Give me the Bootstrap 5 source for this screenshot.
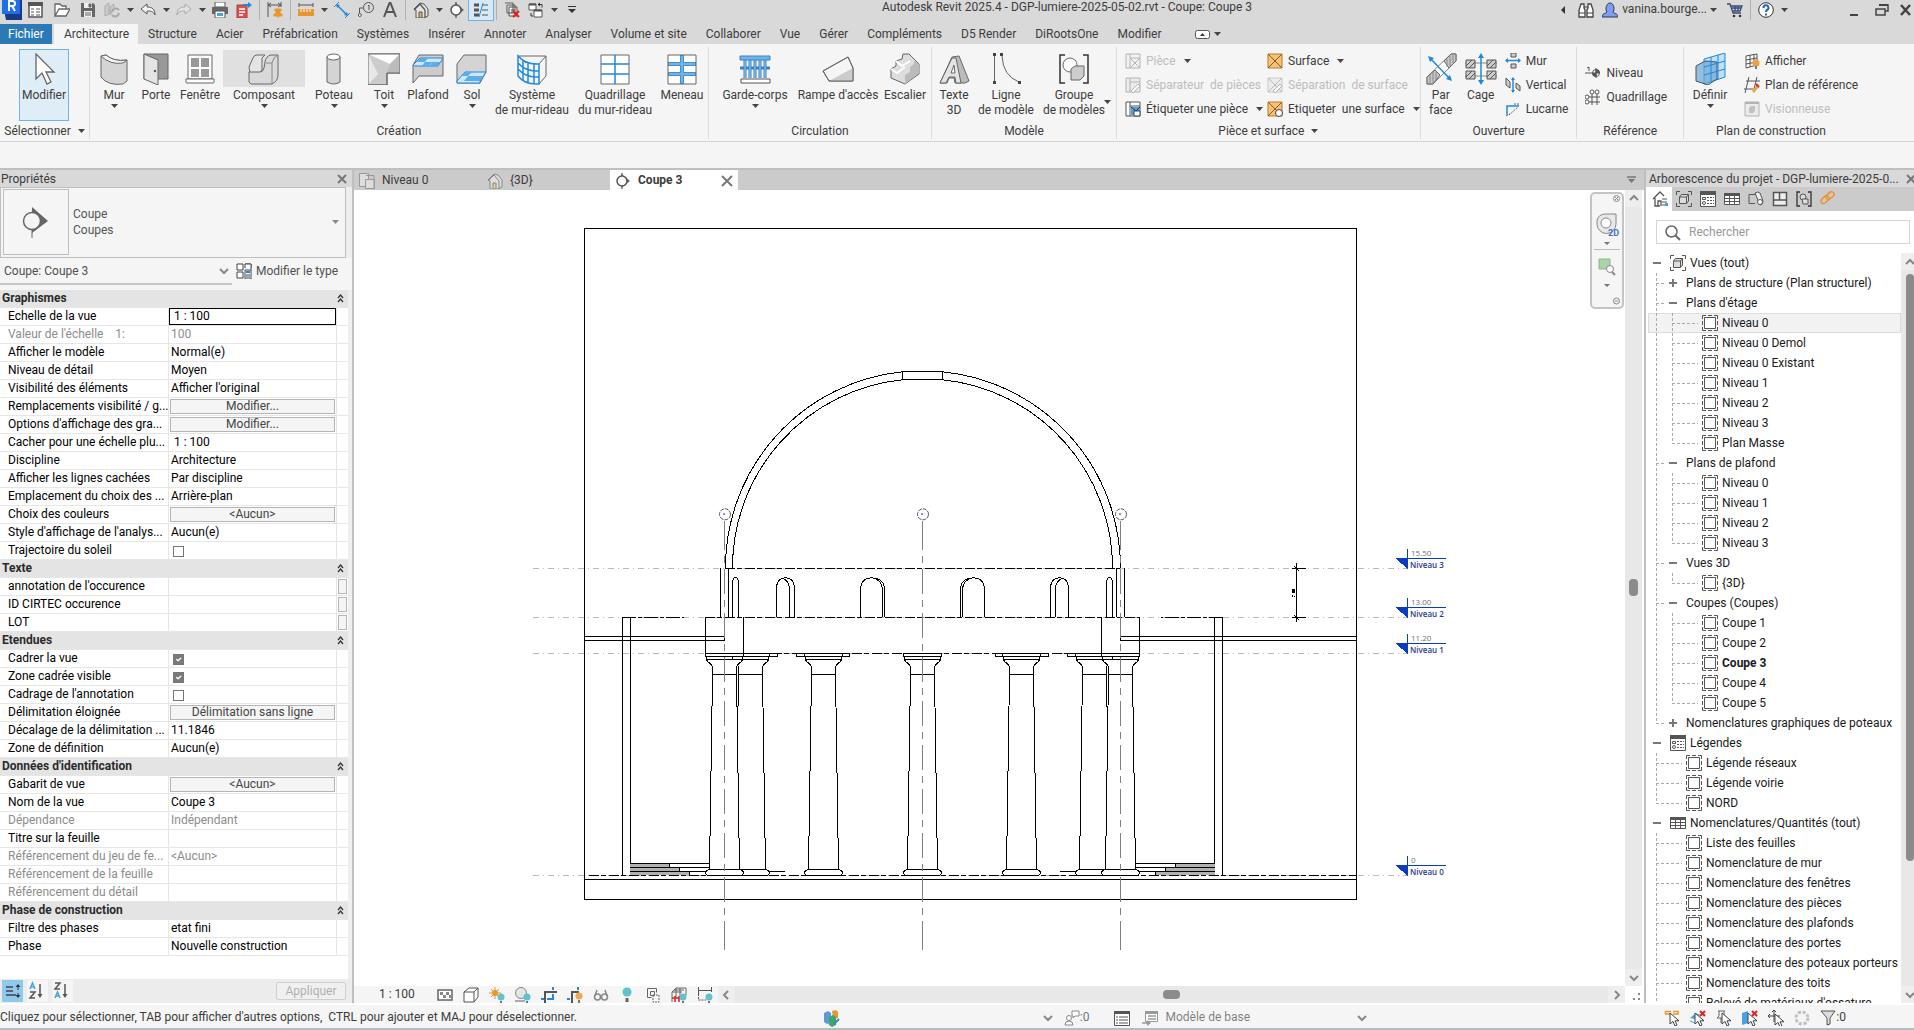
<!DOCTYPE html>
<html lang="fr">
<head>
<meta charset="utf-8">
<meta name="viewport" content="width=device-width, initial-scale=1">
<title>Autodesk Revit 2025.4 - DGP-lumiere-2025-05-02.rvt - Coupe: Coupe 3</title>
<link href="https://cdn.jsdelivr.net/npm/bootstrap@5.3.0/dist/css/bootstrap.min.css" rel="stylesheet">
<style>
:root{--chrome:#d9d9d9;--face:#f5f5f5;--edge:#bfbfbf;--ink:#3c3c3c;--blue:#2c7ab5}
body{font-family:Roboto,"Segoe UI",sans-serif;font-size:12px;line-height:15px;color:var(--ink);background:var(--face)}
svg{display:block;flex:none}
button,.tool{background:none;border:0;padding:0;color:inherit;font-size:12px;line-height:15px}
a{color:inherit;text-decoration:none}
.i16{width:16px;height:16px}.i20{width:20px;height:20px}.i32{width:32px;height:32px}.ar{width:7px;height:4px}
.off{color:#bdbdbd}.off svg:not(.ar){opacity:.4}
.titlebar{height:24px;background:var(--chrome);padding-bottom:5px}
.q{width:24px}.qw{width:28px}.qa{width:12px}.qs{width:7px}
.q,.qw,.qa,.qs{display:flex;justify-content:center;align-items:center;height:20px}
.qs::before{content:"";width:1px;height:20px;background:#b0b0b0}
.q-on{background:#d6e9f5;outline:1px solid #6cb4ea}
.tabbar{height:20px;background:var(--chrome)}
.tabbar a{padding:0 9px 0 10px;line-height:20px;white-space:nowrap}
.tabbar .file-tab{background:var(--blue);color:#fff;width:52px;padding:0 8px;margin-right:2px}
.tabbar .tab-on{background:var(--face)}
.ribbon{height:98px;border-bottom:1px solid #d4d4d4}
.rpanel{border-right:1px solid #dcdcdc;margin:3px 0 2px;display:flex;flex-direction:column}
.rpanel:last-child{border:0}
.rbody{display:flex;height:76px;padding-top:2px}
.rname{display:flex;justify-content:center;align-items:center;gap:7px;height:16px;white-space:nowrap}
.tool{display:flex;flex-direction:column;align-items:center;white-space:nowrap;padding-top:3px;text-align:center;height:72px;border:1px solid transparent;flex:none}
.tool .i32{margin-bottom:3px}
.tool .ar{margin-top:1px}
.pick-body{padding-left:19px;padding-right:20px}
.w40{width:40px}.w44{width:44px}.w50{width:50px}.w56{width:56px}.w60{width:60px}.w76{width:76px}.w84{width:84px}.w90{width:90px}
.tool-on{background:#deedf6;border-color:#6cb4ea}
.tool-hot{background:linear-gradient(#e0e0e0,#e0e0e0) no-repeat 0 0/100% 37px}
.small-tools{display:flex;flex-direction:column}
.small-tools button{display:flex;align-items:center;gap:5px;height:24px;white-space:nowrap}
.small-tools .ar{margin-left:3px}
.options{height:26px}
.main{border-top:2px solid var(--edge);min-height:0}
.props{width:354px;border-right:2px solid var(--edge);background:#eee}
.pane-head{height:17px;background:var(--chrome);padding:2px 4px 0 1px;white-space:nowrap}
.type-box{height:71px;border:1px solid var(--edge);margin-right:6px;background:var(--face);padding:1px 6px 1px 2px;line-height:16px;color:#555}
.type-box .ar{opacity:.6}
.type-pic{width:66px;height:66px;border:1px solid var(--edge)}
.sel-row{height:32px;padding-bottom:5px;background:var(--face);color:#505050}
.sel-wrap{width:232px;height:27px;padding-top:2px;border-bottom:2px solid #c6c6c6}
select,input.plain{appearance:none;border:0;background:none;color:inherit;font-size:12px;padding:0;outline:0;min-width:0}
.grid-wrap{background:#fff;margin-right:4px}
.pgrid{table-layout:fixed;width:350px;border-collapse:separate;border-spacing:0;color:#000}
.pgrid td,.pgrid th{height:18px;padding:0 0 0 8px;white-space:nowrap;overflow:hidden;line-height:16px;font-weight:400;border-right:1px solid #e6e6e6;border-bottom:1px solid #e6e6e6}
.pgrid td{padding:0 0 0 2px}
.pgrid label{display:inline}
.pgrid .sect{background:#e4e4e4;font-weight:700;padding:0 6px 0 2px;color:#2b2b2b;border-right:0}
.pgrid .dim{color:#8c8c8c}
.pgrid button{display:block;width:165px;height:15px;margin-left:-1px;border:1px solid #b5b5b5;background:var(--face);color:#444;line-height:13px}
.pgrid td.mini{padding:0 0 0 1px;overflow:visible}
.pgrid .mini button{width:9px;margin:0}
.pgrid .plain{display:block;width:165px;height:17px;padding-left:3px;color:#000}
.pgrid .boxed{border:1px solid #000;margin-left:-2px;width:167px;padding-left:4px}
.pgrid .form-check-input{display:block;width:11px;height:11px;margin:3px 0 0 2px;border:1px solid #777;border-radius:0}
.pgrid .form-check-input:checked{background-color:#7a7a7a}
.pfoot{height:24px;padding:1px 6px 1px 2px;background:#ececec}
.pfoot button{width:21px;height:22px;background:var(--face)}
.pfoot button.sort-on{background:#8fcaec}
.pfoot .apply{width:70px;height:18px;border:1px solid #cfcfcf;border-radius:2px;color:#b0b0b0;background:#f0f0f0}
.view-tabs{height:20px;background:#cbcbcb}
.view-tabs a{width:128px;padding:2px 5px 0;gap:7px;display:flex;align-items:center}
.view-tabs .view-on{background:#fff;font-weight:700}
.canvas svg.draw{width:100%;height:100%}
.navwheel{position:absolute;right:1px;top:2px;width:34px;height:117px;border:2px solid #c4c4c4;border-radius:5px;background:var(--face)}
.sbar{background:#e8e8e8}
.vbar{width:17px;margin-right:2px}
.sbtn{width:17px;height:17px;background:#eee;display:flex;align-items:center;justify-content:center;flex:none}
.knob{background:#8b8b8b;border-radius:4px}
.vbar .knob{width:9px;height:17px}.hbar .knob{width:17px;height:9px}
.viewctl{height:17px}
.vc-icons{gap:10px;padding:0 5px 0 25px;background:var(--face)}
.tree-pane{width:270px;border-left:2px solid var(--edge);background:#fff}
.tree-pane .pane-head{padding:2px 0 0 3px}
.cats{height:24px;background:#cbcbcb;margin-left:2px}
.cats button{width:24px;height:24px;display:flex;align-items:center;justify-content:center}
.cats .cat-on{background:#fff}
.finder{height:25px;border:1px solid #d4d4d4;margin:9px 4px 9px 10px;padding:1px 8px 0;gap:8px}
.finder input{color:#999}
.finder input::placeholder{color:#999;opacity:1}
.tree{list-style:none;margin:0 0 0 2px;padding:0;overflow:hidden;color:#1a1a1a}
.tree li{display:flex;align-items:center;height:20px;white-space:nowrap}
.tree a{margin-left:4px}
.tree .hover-row{background:#f2f2f2;box-shadow:inset 0 0 0 1px #dcdcdc}
.tbar{width:13px}
.tbar .knob{width:8px;height:587px;margin-left:5px}
.status{height:27px;padding-top:2px;border-top:2px solid #fff;border-bottom:2px solid #b4bcc4;background:var(--face)}
.status select{width:180px}
.status-right{gap:10px;padding-right:68px}
.msg{width:823px}
.lv{font:8px "Open Sans",sans-serif;fill:#707070}.lb{font:600 8px "Open Sans",sans-serif;fill:#2c3a94}
</style>
</head>
<body class="vh-100 overflow-hidden d-flex flex-column">

<svg width="0" height="0" class="position-absolute" aria-hidden="true">
<defs>
<g id="cur"><path d="M0 0v11l3-2.600 2 4.600 2-1-2-4.200h4z" fill="#fff" stroke="#444"/></g>
<symbol id="down" viewBox="0 0 7 4"><path d="M0 0h7L3.500 4z" fill="#444"/></symbol>
<symbol id="chev" viewBox="0 0 16 16"><path d="M4 6l4 4 4-4" fill="none" stroke="#888" stroke-width="2"/></symbol>
<symbol id="secthead" viewBox="0 0 32 32"><path d="M13 2l17 14-17 13z" fill="#666"/><circle cx="14" cy="16" r="10" fill="#fff" stroke="#555" stroke-width="3"/><path d="M14 0v6M14 26v6" stroke="#555" stroke-width="2.500"/></symbol>
<symbol id="sheet" viewBox="0 0 16 16"><path d="M2.500 2.500h11v11h-11z" fill="#fff" stroke="#555" /><path d="M.5 4V.5H4M6 .5h4M12 .5h3.500V4M15.500 6v4M15.500 12v3.500H12M10 15.500H6M4 15.500H.5V12M.5 10V6" fill="none" stroke="#555"/></symbol>
<symbol id="views" viewBox="0 0 16 16"><path d="M.5 4V.5H4M12 .5h3.500V4M15.500 12v3.500H12M4 15.500H.5V12" fill="none" stroke="#555"/><path d="M3.500 6l2-2.500h7V10l-2 2.500h-7z" fill="#ddd" stroke="#555"/><path d="M3.500 6h7v6M10.500 6l2-2.500" fill="none" stroke="#555"/></symbol>
<symbol id="legend" viewBox="0 0 16 16"><path d="M.5.5h15v15H.5z" fill="#fff" stroke="#555"/><path d="M0 0h16v4H0z" fill="#555"/><path d="M2.500 6.500h3v2h-3z" fill="none" stroke="#555"/><circle cx="4" cy="12" r="1.500" fill="none" stroke="#555"/><path d="M7 6.500h7M7 9.500h7M7 12.500h7" stroke="#555" stroke-dasharray="2 1"/></symbol>
<symbol id="table" viewBox="0 0 16 16"><path d="M.5 2.500h15v11H.5z" fill="#fff" stroke="#555"/><path d="M0 2h16v3H0z" fill="#555"/><path d="M0 7.500h16M0 10.500h16M5.500 4v10M10.500 4v10" stroke="#555"/></symbol>
</defs></svg>

<header>
<div class="titlebar d-flex align-items-center">
  <div class="q"><svg width="20" height="20" role="img" aria-label="Revit"><path d="M0 0h20v20H4z" fill="#1b3a86"/><path d="M0 0h18v14H0z" fill="#1f6fe8"/><path d="M7 11V1h3.500a2.500 2.500 0 0 1 0 5H7M10 6l3 5" fill="none" stroke="#fff" stroke-width="2"/></svg></div>
  <button class="q" aria-label="Propriétés"><svg class="i16"><path d="M1 1h13v14H1z" fill="#fff" stroke="#555" stroke-width="1.500"/><path d="M0 0h15v4H0z" fill="#555"/><path d="M3 7h3M3 10h3M3 13h3M8 7h4M8 10h4M8 13h4" stroke="#555"/></svg></button>
  <button class="qw" aria-label="Ouvrir"><svg class="i16"><path d="M1 14V2h5l2 2h4v3M1 14l4-7h11l-4 7z" fill="#fff" stroke="#666" stroke-width="1.300"/></svg></button>
  <button class="q" aria-label="Enregistrer"><svg class="i16"><path d="M1 1h12l2 2v12H1z" fill="#666"/><path d="M4 1h8v5H4zM4 9h8v6H4z" fill="#eee"/><path d="M9 2h2v3H9zM5 11h6M5 13h6" stroke="#666" fill="#666"/></svg></button>
  <button class="q" aria-label="Synchroniser"><svg class="i16"><path d="M1 4l4-3v11l-4 2zM6 5l4-3v5l-4 6z" fill="#ccc" stroke="#aaa"/><path d="M8 10a4 4 0 0 1 7-2M15 11a4 4 0 0 1-7 2" fill="none" stroke="#aaa" stroke-width="2"/></svg></button>
  <span class="qa"><svg class="ar"><use href="#down"/></svg></span>
  <button class="q" aria-label="Annuler"><svg class="i16"><path d="M1 7l6-5v3c5 0 8 2 8 8-2-4-4-4-8-4v3z" fill="#f5f5f5" stroke="#555"/></svg></button>
  <span class="qa"><svg class="ar"><use href="#down"/></svg></span>
  <button class="q" aria-label="Rétablir"><svg class="i16"><path d="M15 7L9 2v3C4 5 1 7 1 13c2-4 4-4 8-4v3z" fill="#e2e2e2" stroke="#aaa"/></svg></button>
  <span class="qa"><svg class="ar"><use href="#down"/></svg></span>
  <button class="q" aria-label="Imprimer"><svg class="i16"><path d="M3 0h10v5H3z" fill="#fff" stroke="#555"/><path d="M0 5h16v7H0z" fill="#666"/><path d="M3 9h10v7H3z" fill="#fff" stroke="#555"/><path d="M5 11h6v3H5z" fill="#4aa3e0"/></svg></button>
  <button class="q" aria-label="Exporter en PDF"><svg class="i16"><path d="M1 3h10v13H1z" fill="#d9534f" stroke="#b03a36"/><path d="M3 7h6M3 10h6M3 13h4" stroke="#fff" stroke-width="1.500"/><path d="M7 2h5V0l4 3-4 3V4H7z" fill="#1e88e0"/></svg></button>
  <span class="qs"></span>
  <button class="q" aria-label="Cote alignée"><svg class="i16"><path d="M1 0v15M14 0v5M1 3h13M4 1L1 3l3 2M11 1l3 2-3 2" fill="none" stroke="#555"/><path d="M8 7h6v2h-1v3h2v2H7v-2h2V9H8zM11 14v2" fill="#e8962e" stroke="#e8962e"/></svg></button>
  <span class="qs"></span>
  <button class="q" aria-label="Mesurer"><svg class="i16"><path d="M1 1v4M15 1v4M1 3h14" stroke="#555"/><path d="M0 7h16v7H0z" fill="#e8962e"/><path d="M3 7v3M6 7v3M9 7v3M12 7v3" stroke="#fff"/></svg></button>
  <span class="qa"><svg class="ar"><use href="#down"/></svg></span>
  <button class="q" aria-label="Cote"><svg class="i16"><path d="M3 3l10 10" stroke="#1e88e0" stroke-width="1.500"/><path d="M0 5l5-5M11 16l5-5" stroke="#1e88e0"/><path d="M2 2l4 1-3 3zM14 14l-4-1 3-3z" fill="#1e88e0"/></svg></button>
  <button class="q" aria-label="Étiquette"><svg class="i16"><circle cx="10.500" cy="5.500" r="5" fill="none" stroke="#555"/><path d="M10 4l1-1v5M5.500 6H1.500v6" fill="none" stroke="#555"/><circle cx="1.800" cy="13" r="1.500" fill="#fff" stroke="#555"/></svg></button>
  <button class="q" aria-label="Texte"><svg class="i16"><path d="M2 15L7.500 1h1L14 15M4.500 10h7" fill="none" stroke="#555" stroke-width="2"/></svg></button>
  <span class="qs"></span>
  <button class="q" aria-label="Vue 3D"><svg class="i16"><path d="M1 7l6-6 4 1 4 5v7l-4 2H3V8z" fill="#e4e4e4" stroke="#555"/><path d="M1 8l6-6 5 6M12 8v8" fill="none" stroke="#555" stroke-width="1.300"/><path d="M6 10h3v6H6z" fill="#e8b05a" stroke="#555"/></svg></button>
  <span class="qa"><svg class="ar"><use href="#down"/></svg></span>
  <button class="q" aria-label="Coupe"><svg class="i16"><use href="#secthead"/></svg></button>
  <button class="q q-on" aria-label="Lignes fines"><svg class="i16"><path d="M1 3h5M1 8h5M1 13h5" stroke="#555" stroke-width="3"/><path d="M9 3h6M9 8h6M9 13h6" stroke="#555"/><path d="M6 15l4-14" stroke="#1e88e0"/></svg></button>
  <span class="qs"></span>
  <button class="q" aria-label="Fermer les vues masquées"><svg class="i16"><path d="M1 1h8v8M3 3h8v8H3zM5 5h8v9H5z" fill="#eee" stroke="#555"/><path d="M7 8h4M7 10h4" stroke="#555"/><path d="M9 9l6 6M15 9l-6 6" stroke="#e02020" stroke-width="2"/></svg></button>
  <button class="q" aria-label="Changer de fenêtre"><svg class="i16"><path d="M1 2h7v6H1zM6 8h8v7H6z" fill="#fff" stroke="#555"/><path d="M1 2.500h7M6 8.500h8" stroke="#555" stroke-width="2"/><path d="M10 2.500h4v3M12 1l-2 1.500L12 4M3 11v3h2" fill="none" stroke="#333"/></svg></button>
  <span class="qa"><svg class="ar"><use href="#down"/></svg></span>
  <button class="q" aria-label="Personnaliser"><svg width="8" height="8"><path d="M0 .5h8" stroke="#333"/><path d="M0 3h8L4 7z" fill="#333"/></svg></button>
  <div class="flex-grow-1 text-center pb-1 pe-2">Autodesk Revit 2025.4 - DGP-lumiere-2025-05-02.rvt - Coupe: Coupe 3</div>
  <div class="d-flex align-items-center">
    <svg width="12" height="8" class="me-1"><path d="M7 0v8L3 4z" fill="#333"/></svg>
    <button class="q" aria-label="Rechercher"><svg class="i16"><path d="M3 2h3v4l1 2v7H1V8zM10 2h3l2 6v7H9V8l1-2z" fill="#fff" stroke="#444" stroke-width="1.300"/><path d="M6 5h4M1 11h6M9 11h6" stroke="#444"/></svg></button>
    <button class="q" aria-label="Compte"><svg class="i16"><path d="M0 15c0-4 4-3 5-5C3 8 4 1 8 1s5 7 3 9c1 2 5 1 5 5z" fill="#7d9ff0" stroke="#335"/></svg></button>
    <a href="#">vanina.bourge...</a>
    <span class="qa"><svg class="ar"><use href="#down"/></svg></span>
    <button class="q ms-1" aria-label="App Store"><svg class="i16"><path d="M0 2h3l3 9h8M4 4h11l-2 5H6M5 6h9M8 4v5M11 4v5" fill="none" stroke="#3b4a7a" stroke-width="1.300"/><circle cx="7" cy="14" r="1.300" fill="#333"/><circle cx="13" cy="14" r="1.300" fill="#333"/></svg></button>
    <span class="qs"></span>
    <button class="q" aria-label="Aide"><svg class="i16"><circle cx="8" cy="8" r="7.300" fill="#fff" stroke="#333"/><path d="M5.500 6a2.500 2.500 0 1 1 3.500 2q-1 .5-1 2M8 11.500v2" fill="none" stroke="#2a62c0" stroke-width="2"/></svg></button>
    <span class="qa"><svg class="ar"><use href="#down"/></svg></span>
    <span class="d-flex gap-2 ps-5 ms-1">
    <button class="q" aria-label="Réduire"><svg class="i16"><path d="M4 13h8" stroke="#444" stroke-width="2"/></svg></button>
    <button aria-label="Restaurer"><svg class="i16"><path d="M5 3h9v6h-3M2 7h9v6H2z" fill="none" stroke="#444" stroke-width="1.500"/><path d="M5 3h9" stroke="#444" stroke-width="2"/></svg></button>
    <button aria-label="Fermer"><svg class="i16"><path d="M3 3l9 10M12 3L3 13" stroke="#444" stroke-width="2.500"/></svg></button></span>
  </div>
</div>
<nav class="tabbar d-flex">
  <a href="#" class="file-tab">Fichier</a><a href="#" class="tab-on">Architecture</a><a href="#">Structure</a><a href="#">Acier</a><a href="#">Préfabrication</a><a href="#">Systèmes</a><a href="#">Insérer</a><a href="#">Annoter</a><a href="#">Analyser</a><a href="#">Volume et site</a><a href="#">Collaborer</a><a href="#">Vue</a><a href="#">Gérer</a><a href="#">Compléments</a><a href="#">D5 Render</a><a href="#">DiRootsOne</a><a href="#">Modifier</a>
  <button class="d-flex align-items-center gap-1 ps-4" aria-label="Réduire le ruban"><svg width="15" height="9"><rect x=".5" y=".5" width="14" height="8" rx="2" fill="#fff" stroke="#555"/><path d="M5 6l2.500-3L10 6z" fill="#333"/></svg><svg class="ar"><use href="#down"/></svg></button>
</nav>
</header>

<section class="ribbon d-flex">
  <div class="rpanel">
    <div class="rbody pick-body"><button class="tool w50 tool-on"><svg class="i32"><path d="M8 1v25l6-6 5 11 4-2-5-10h8z" fill="#fff" stroke="#666" stroke-width="1.300"/></svg>Modifier</button></div>
    <div class="rname">Sélectionner <svg class="ar"><use href="#down"/></svg></div>
  </div>
  <div class="rpanel">
    <div class="rbody ps-1 pe-1">
      <button class="tool w40"><svg class="i32"><path d="M3 3l5-1q8 7 21 5v21l-4 3Q10 33 3 24z" fill="#d4d4d4" stroke="#666"/><path d="M3 3q9 9 22 7l4-3q-13 2-21-5z" fill="#f5f5f5" stroke="#666"/></svg>Mur<svg class="ar"><use href="#down"/></svg></button>
      <button class="tool w44"><svg class="i32"><path d="M4 1h24v25H4z" fill="#999" stroke="#666"/><path d="M4 1l14 6v25L4 26z" fill="#e4e4e4" stroke="#666"/><circle cx="15" cy="18" r="1.200" fill="#555"/></svg>Porte</button>
      <button class="tool w44"><svg class="i32"><path d="M4 2h24v24H4z" fill="#fff" stroke="#666"/><path d="M7 5h8v9H7zM17 5h8v9h-8zM7 16h8v8H7zM17 16h8v8h-8z" fill="#999"/><path d="M2 26h28v3q0 1-1 1H3q-1 0-1-1z" fill="#fff" stroke="#666"/></svg>Fenêtre</button>
      <button class="tool w84 tool-hot"><svg class="i32"><path d="M1 14l4-9q1-3 4-3h8l-3 3v12l-2 3H2z" fill="#e4e4e4" stroke="#666"/><path d="M1 29V19h11q3 0 4-4l1-6q1-6 6-7h7v20q0 6-6 9H3z" fill="#d9d9d9" stroke="#666"/><path d="M24 31V10q1-6 6-8M18 10h6" fill="none" stroke="#888"/></svg>Composant<svg class="ar"><use href="#down"/></svg></button>
      <button class="tool w56"><svg class="i32"><path d="M9 4v25q7 4 13 0V4z" fill="#d4d4d4" stroke="#666"/><ellipse cx="15.500" cy="4" rx="6.500" ry="3" fill="#fff" stroke="#666"/></svg>Poteau<svg class="ar"><use href="#down"/></svg></button>
      <button class="tool w44"><svg class="i32"><path d="M0 1h32v19H19v12H0z" fill="#ccc" stroke="#666"/><path d="M0 1h32L22 11z" fill="#fff"/><path d="M0 1l10 20L0 32z" fill="#e8e8e8"/><path d="M32 1v19H19l3-9z" fill="#bbb"/><path d="M0 1h32v19H19v12H0z" fill="none" stroke="#666"/></svg>Toit<svg class="ar"><use href="#down"/></svg></button>
      <button class="tool w44"><svg class="i32"><path d="M1 12l6-10h24v21H7L1 30z" fill="#ccc" stroke="#666"/><path d="M1 12l7-7h23l-5 8H3z" fill="#cfe8fb" stroke="#1e88e0"/><path d="M8 5h8l-3 4h-8zM20 9h8l-2 4h-8zM13 9h7l-3 4h-7z" fill="#5aaeee"/></svg>Plafond</button>
      <button class="tool w44"><svg class="i32"><path d="M1 11l7-9h22v17l-6 11H1z" fill="#d4d4d4" stroke="#666"/><path d="M1 28l8-9h21l-6 9v2H1z" fill="#cfe8fb" stroke="#1e88e0"/><path d="M9 19h7l-4 4H5zM20 23h8l-4 5h-7zM12 23h8l-3 5H8z" fill="#5aaeee"/></svg>Sol<svg class="ar"><use href="#down"/></svg></button>
      <button class="tool w76"><svg class="i32"><path d="M2 3h28v20l-7 8M2 3l8 7M30 3l-7 8" fill="none" stroke="#666"/><path d="M2 3v20q7 9 21 8V11Q10 12 2 3zM2 10q8 9 21 8M2 16q8 9 21 8M7 8v20M12 10v20M18 11v20" fill="none" stroke="#1e88e0" stroke-width="1.500"/></svg><span>Système<br>de mur-rideau</span></button>
      <button class="tool w90"><svg class="i32"><path d="M2 2h28v29H2z" fill="#fff" stroke="#666"/><path d="M16 2v29M2 11h28M2 21h28" stroke="#1e88e0" stroke-width="1.500"/></svg><span>Quadrillage<br>du mur-rideau</span></button>
      <button class="tool w44"><svg class="i32"><path d="M2 2h28v29H2z" fill="#fff" stroke="#666"/><path d="M16 2v29M2 11h28M2 21h28" stroke="#3b83c0" stroke-width="4"/><path d="M16 3v27M3 11h26M3 21h26" stroke="#6cb4ea" stroke-width="2.500"/></svg>Meneau</button>
    </div><div class="rname">Création</div>
  </div>
  <div class="rpanel">
    <div class="rbody ps-2 pe-1">
      <button class="tool w76"><svg class="i32"><path d="M1 15h30M6 7v18M11 7v18M16 7v18M21 7v18M26 7v18" stroke="#3b83c0" stroke-width="3"/><path d="M6 7v18M11 7v18M16 7v18M21 7v18M26 7v18" stroke="#9cd0f5"/><path d="M1 3h30v4H1z" fill="#6cb4ea" stroke="#3b83c0"/><path d="M2 26h29v4H2z" fill="#fff" stroke="#555"/></svg>Garde-corps<svg class="ar"><use href="#down"/></svg></button>
      <button class="tool w90"><svg class="i32"><path d="M1 18L26 4l5 11v13H7z" fill="#f5f5f5" stroke="#666"/><path d="M7 28l24-13v13z" fill="#ccc"/><path d="M1 18L26 4l5 11v13H7z" fill="none" stroke="#666"/></svg>Rampe d'accès</button>
      <button class="tool w44"><svg class="i32"><path d="M2 16l5-3V8l6-2 1-5h6l10 10v10L16 31 2 25z" fill="#ddd" stroke="#666"/><path d="M16 31V22l5-3v-5l4-3V8l5 3v9z" fill="#bbb"/><path d="M2 16l6 4 8-6M7 8l6 5 8-5" fill="none" stroke="#fff" stroke-width="2"/></svg>Escalier</button>
    </div><div class="rname">Circulation</div>
  </div>
  <div class="rpanel">
    <div class="rbody pe-1">
      <button class="tool w44"><svg class="i32"><path d="M2 30L14 4l7-1 10 25-4 2H17l-1-5h-5l-2 5z" fill="#bbb" stroke="#666"/><path d="M2 30L14 5h4l5 25h-5l-1-6h-6l-3 6z" fill="#e4e4e4" stroke="#666"/><path d="M13 20l3-8 1 8z" fill="#fff" stroke="#666"/></svg><span>Texte<br>3D</span></button>
      <button class="tool w60"><svg class="i32"><path d="M4.500 3v26M12 3q1 20 17 26" fill="none" stroke="#666"/><path d="M3 0h3v3H3zM10 0h3v3h-3zM3 28h3v3H3zM28 28h3v3h-3z" fill="#444"/></svg><span>Ligne<br>de modèle</span></button>
      <button class="tool w76 position-relative"><svg class="i32"><path d="M7 2H2v28h5M25 2h5v28h-5" fill="none" stroke="#333" stroke-width="1.500"/><circle cx="12" cy="12" r="7" fill="#fff" stroke="#666"/><path d="M13 16l4-3h9v10l-4 4h-9z" fill="#ccc" stroke="#666"/></svg><span>Groupe<br>de modèles</span><svg class="ar position-absolute bottom-0 end-0 mb-3"><use href="#down"/></svg></button>
    </div><div class="rname">Modèle</div>
  </div>
  <div class="rpanel">
    <div class="rbody ps-2 gap-1">
      <div class="small-tools">
        <button class="off" disabled><svg class="i16"><path d="M1 1h14v14H1z" fill="#eee" stroke="#555"/><path d="M5 1v14M5 5h10M6 6l8 8M14 6l-8 8" stroke="#555"/></svg>Pièce <svg class="ar"><use href="#down"/></svg></button>
        <button class="off" disabled><svg class="i16"><path d="M1 1h14v14H1z" fill="#ddd" stroke="#555"/><path d="M5 1v14M5 5h10" stroke="#555"/><path d="M6 14l7-7 2 2-7 7z" fill="#fff" stroke="#555"/></svg>Séparateur&nbsp; de pièces</button>
        <button><svg class="i16"><path d="M1 1h14v14H1z" fill="#fff" stroke="#555"/><path d="M5 1v14M5 5h10" stroke="#555"/><path d="M6 6h9v8H6z" fill="#4aa3e0"/><path d="M6 6l5 4 4-4" fill="none" stroke="#235"/><path d="M9 10h6v5H9z" fill="#fff" stroke="#444"/></svg>Étiqueter une pièce <svg class="ar"><use href="#down"/></svg></button>
      </div>
      <div class="small-tools">
        <button><svg class="i16"><path d="M1 1h14v14H1z" fill="#f6c27a" stroke="#b87820"/><path d="M1 1l14 14M15 1L1 15" stroke="#8a5a18"/></svg>Surface <svg class="ar"><use href="#down"/></svg></button>
        <button class="off" disabled><svg class="i16"><path d="M1 1h14v14H1z" fill="#ddd" stroke="#888"/><path d="M1 1l14 14M15 1L1 15" stroke="#666"/><path d="M6 14l7-7 2 2-7 7z" fill="#fff" stroke="#555"/></svg>Séparation&nbsp; de surface</button>
        <button><svg class="i16"><path d="M1 1h14v14H1z" fill="#f6c27a" stroke="#b87820"/><path d="M1 1l14 14M15 1L1 15" stroke="#8a5a18"/><circle cx="12" cy="12" r="3.500" fill="#fff" stroke="#444"/></svg>Etiqueter&nbsp; une surface <svg class="ar"><use href="#down"/></svg></button>
      </div>
    </div><div class="rname">Pièce et surface <svg class="ar"><use href="#down"/></svg></div>
  </div>
  <div class="rpanel">
    <div class="rbody pe-2">
      <button class="tool w40"><svg class="i32"><path d="M2 31V24L26 1h5v7L8 31z" fill="#fff" stroke="#888"/><path d="M2 31V24l8-7 5 5-7 9zM19 8l7-7h5v7l-7 7z" fill="#c8c8c8" stroke="#666"/><path d="M5 22v9M8 19v11M11 19v8M22 6v8M25 3v10M28 1v9" stroke="#888"/><path d="M5 5l20 21" stroke="#1e88e0" stroke-width="1.500"/><path d="M3 3l6 2-4 4zM27 28l-6-2 4-4z" fill="#1e88e0"/></svg><span>Par<br>face</span></button>
      <button class="tool w40"><svg class="i32"><path d="M0 10h32M0 23h32" stroke="#888"/><path d="M1 7h9v8H1zM22 7h9v8h-9zM1 18h9v8H1zM22 18h9v8h-9z" fill="#ccc" stroke="#555"/><path d="M1 13l6-6M4 15l6-6M22 13l6-6M25 15l6-6M1 24l6-6M4 26l6-6M22 24l6-6M25 26l6-6" stroke="#555"/><path d="M16 2v28" stroke="#1e88e0" stroke-width="1.500"/><path d="M13 5l3-5 3 5zM13 27l3 5 3-5z" fill="#1e88e0"/></svg>Cage</button>
      <div class="small-tools ms-1">
        <button><svg class="i16"><path d="M6 0h5v4H6zM6 11h5v4H6z" fill="#ccc" stroke="#555"/><path d="M1 7.500h14" stroke="#1e88e0" stroke-width="1.500"/><path d="M3 5L0 7.500 3 10zM13 5l3 2.500-3 2.500z" fill="#1e88e0"/></svg>Mur</button>
        <button><svg class="i16"><path d="M1 1l4 4v6L1 8zM11 6l4 3v5l-4-3z" fill="#ccc" stroke="#555"/><path d="M8 1v14" stroke="#1e88e0" stroke-width="1.500"/><path d="M6 3l2-3 2 3zM6 13l2 3 2-3z" fill="#1e88e0"/></svg>Vertical</button>
        <button><svg class="i16"><path d="M2 14V5h12" fill="none" stroke="#1e88e0" stroke-width="1.500"/><path d="M4 14L13 6M9 3h6M1 15l4-2" stroke="#666" stroke-dasharray="2 1"/></svg>Lucarne</button>
      </div>
    </div><div class="rname">Ouverture</div>
  </div>
  <div class="rpanel">
    <div class="rbody ps-2 pe-3">
      <div class="small-tools pt-2 mt-1">
        <button><svg class="i16"><path d="M0 8h8M2 3l2-1v4" fill="none" stroke="#555"/><circle cx="11" cy="8" r="3.500" fill="#fff" stroke="#555"/><path d="M11 3v10M11 4.500A3.500 3.500 0 0 1 14.500 8H11zM11 11.500A3.500 3.500 0 0 1 7.500 8H11z" stroke="#555" fill="#555"/></svg>Niveau</button>
        <button><svg class="i16"><path d="M2 8h13M2 13h13M7 5v11M12 5v11" stroke="#555"/><circle cx="7" cy="3" r="2" fill="#fff" stroke="#555"/><circle cx="12" cy="3" r="2" fill="#fff" stroke="#555"/><circle cx="2" cy="8" r="2" fill="#fff" stroke="#555"/><circle cx="2" cy="13" r="2" fill="#fff" stroke="#555"/></svg>Quadrillage</button>
      </div>
    </div><div class="rname">Référence</div>
  </div>
  <div class="rpanel">
    <div class="rbody ps-1">
      <button class="tool w44"><svg class="i32"><path d="M10 6L31 0v24L10 31z" fill="#bfe0f8" stroke="#1e88e0"/><path d="M2 13l9-5 12 1v17l-9 6-12-4z" fill="#6ba6d3" fill-opacity=".7" stroke="#456"/><path d="M17 4v25M24 2v25M10 14l21-6M10 22l21-6" stroke="#1e88e0"/></svg>Définir<svg class="ar"><use href="#down"/></svg></button>
      <div class="small-tools ms-2 ps-1">
        <button><svg class="i16"><path d="M2 3l11-2v11L2 15zM2 7l11-2M2 11l11-2M6 2v12M10 1v12" fill="#fff" stroke="#555"/><circle cx="12" cy="10" r="3.500" fill="#f0a040"/><path d="M12 13v3" stroke="#777" stroke-width="2"/></svg>Afficher</button>
        <button><svg class="i16"><path d="M5 0L1 16M13 0l-3 12M2 4h14M0 12h9" stroke="#555"/><path d="M8 14l5-6 2 2-5 6z" fill="#f0a040"/><path d="M12 7l3 3" stroke="#e02020" stroke-width="2"/></svg>Plan de référence</button>
        <button class="off" disabled><svg class="i16"><path d="M1 1h14v14H1z" fill="#ddd" stroke="#555"/><path d="M1 2h14" stroke="#555" stroke-width="2"/><path d="M5 7l2-2h4v5l-2 2H5z" fill="#777"/></svg>Visionneuse</button>
      </div>
    </div><div class="rname">Plan de construction</div>
  </div>
</section>
<div class="options"></div>

<main class="main d-flex flex-grow-1">
  <aside class="props d-flex flex-column flex-shrink-0">
    <div class="pane-head d-flex justify-content-between align-items-center">Propriétés<button aria-label="Fermer"><svg width="12" height="12"><path d="M2 2l8 8M10 2l-8 8" stroke="#777" stroke-width="2"/></svg></button></div>
    <div class="type-box d-flex align-items-center">
      <div class="type-pic d-flex align-items-center justify-content-center"><svg class="i32"><path d="M12 5V1l16 14-16 12v5" fill="#666"/><path d="M12 24v8" stroke="#666"/><circle cx="12" cy="15" r="8.500" fill="#f5f5f5" stroke="#666" stroke-width="1.500"/></svg></div>
      <div class="flex-grow-1 ps-1">Coupe<br>Coupes</div><svg class="ar"><use href="#down"/></svg>
    </div>
    <div class="sel-row d-flex">
      <div class="sel-wrap d-flex align-items-center ps-1"><select class="flex-grow-1" aria-label="Élément"><option>Coupe: Coupe 3</option></select><svg class="i16"><use href="#chev"/></svg></div>
      <button class="d-flex align-items-center gap-1 ps-1"><svg class="i16"><path d="M1 1h6v6H1zM9 1h6v4M1 9h6v6H1z" fill="#fff" stroke="#444"/><path d="M9 5v-4h6v6M9 7h6v9H9z" fill="#fff" stroke="#444"/><path d="M10 8h4v2h-4z" fill="#1e88e0"/><path d="M10 12h4M10 14h4" stroke="#444"/></svg>Modifier le type</button>
    </div>
    <div class="grid-wrap flex-grow-1 overflow-hidden"><table class="pgrid"><colgroup><col width="169"><col width="168"><col width="13"></colgroup><tbody id="props"></tbody></table></div>
    <div class="pfoot d-flex align-items-center gap-1">
      <button class="sort-on" aria-label="Tri par groupe"><svg class="i20"><path d="M4 6h7M4 10h7M4 14h10" stroke="#444" stroke-width="1.500"/><path d="M16 9V4M16 12v4" stroke="#333"/><path d="M13.500 6L16 3l2.500 3zM13.500 14l2.500 3 2.500-3z" fill="#333"/></svg></button>
      <button aria-label="Tri croissant"><svg class="i20"><path d="M3 8l2.500-6L8 8M4 6h3" fill="none" stroke="#4aa3e0" stroke-width="1.500"/><path d="M3 11h5l-5 6h5M13 3v12" fill="none" stroke="#555" stroke-width="1.500"/><path d="M10.500 13l2.500 4 2.500-4z" fill="#555"/></svg></button>
      <button aria-label="Tri décroissant"><svg class="i20"><path d="M3 17l2.500-6L8 17M4 15h3" fill="none" stroke="#4aa3e0" stroke-width="1.500"/><path d="M3 2h5L3 8h5M13 3v12" fill="none" stroke="#555" stroke-width="1.500"/><path d="M10.500 13l2.500 4 2.500-4z" fill="#555"/></svg></button>
      <button class="apply ms-auto" disabled>Appliquer</button>
    </div>
  </aside>

  <section class="d-flex flex-column flex-grow-1 bg-white">
    <nav class="view-tabs d-flex align-items-center">
      <a href="#" class="h-100"><svg class="i16"><path d="M.5.500h9v13h-9z" fill="#ddd" stroke="#999"/><path d="M6.500 6.500h9v9h-9z" fill="#ddd" stroke="#999"/><path d="M7 2.500h8v13" fill="none" stroke="#999"/></svg>Niveau 0</a>
      <a href="#" class="h-100"><svg class="i16"><path d="M1 7l6-6 4 1 4 5v7l-4 2H3V8z" fill="#ddd" stroke="#888"/><path d="M1 8l6-6 5 6M12 8v8" fill="none" stroke="#888"/><path d="M6 10h3v6H6z" fill="#e8cf8a" stroke="#888"/></svg>{3D}</a>
      <a href="#" class="h-100 view-on"><svg class="i16"><use href="#secthead"/></svg>Coupe 3<svg width="12" height="12" class="ms-auto"><path d="M1 1l10 10M11 1L1 11" stroke="#777" stroke-width="2"/></svg></a>
      <svg width="9" height="8" class="ms-auto me-2"><path d="M0 1h9" stroke="#777" stroke-width="1.500"/><path d="M1 3h7L4.500 7z" fill="#777"/></svg>
    </nav>
    <div class="d-flex flex-grow-1 overflow-hidden">
      <div class="canvas flex-grow-1 position-relative">
        <svg class="draw" viewBox="354 190 1271 796" fill="none" stroke="#000" shape-rendering="crispEdges" role="img" aria-label="Coupe 3">
          <defs>
            <g id="col"><path d="M-18 659.500C-16 664-12 662-12 669V674L-15 869.500H15L12 674V669C12 662 16 664 18 659.500Z" fill="#fff"/><path d="M-12 674.500H12M-18 656.500V659.500H18V656.500"/><path d="M-16 869.500Q-19 870-19 873L-17 875.500H17L19 873Q19 870 16 869.500Z" fill="#fff"/><path d="M-19 653.500H19V656.500H-19Z" fill="#fff"/></g>
            <g id="half">
              <path d="M720.500 568V617M728.500 568V617M732.500 617V584Q732.500 577 735.500 577Q738.500 577 738.500 584V617"/>
              <path d="M776.500 617V586Q778 577.500 785.500 577.500Q793 577.500 794.500 586V617M782 578Q789 580 789.500 588V617"/>
              <path d="M860.500 617V587Q862 577.500 872 577.500Q883 578 884.500 587V617M873 578Q881 579 882.500 588V617"/>
              <path d="M622.500 875V617.500M630.500 875V617.500"/><path d="M622 617.500H684" stroke-dasharray="14 2 4 2"/>
              <path d="M630 863h39v4h-39zM630 867h49v4h-49zM630 871h59v4h-59z" fill="#b0b0b0" stroke="none"/>
              <path d="M630 863.500H710M630 867.500H710M630 871.500H706M669.500 863v4M679.500 867v4M689.500 871v4M769 871.500H785"/>
              <path d="M745 653.500H777.500V656.500H745M757.500 653v3M796.500 653.500H849.500V656.500H796.500ZM816.500 653v3"/>
              <use href="#col" x="823.500"/><use href="#col" x="750.500"/><use href="#col" x="724.500"/>
              <path d="M705.500 617V656M743.500 617V656"/>
            </g>
          </defs>
          <g stroke="#bababa" stroke-dasharray="6 4 1 4"><path d="M533 568.500H1407M533 617.500H1407M533 653.500H1407M533 875.500H1407"/></g>
          <path d="M584.500 228.500H1356.500V899.500H584.500Z"/>
          <path d="M584 879.500H1356"/>
          <path d="M584 636.500H724.500V640.500H584M1356 636.500H1120.500V640.500H1356"/>
          <path d="M725.500 568A197 197 0 0 1 902.500 371.500H942.500A197 197 0 0 1 1120.500 568M732.500 568A189 189 0 0 1 902.500 379.500H942.500A189 189 0 0 1 1112.500 568M902.500 371V379M942.500 371V379"/>
          <use href="#half"/><use href="#half" transform="matrix(-1 0 0 1 1845 0)"/>
          <use href="#col" x="922.500"/>
          <path d="M725 568.500H1120M705 617.500H1140M712 653.500H1139M589 875.500H1356" stroke-dasharray="10 2 5 3"/>
          <g stroke="#808080"><path d="M724.500 521V525M922.500 521V525M1120.500 521V525M724.500 946v4M922.500 946v4M1120.500 946v4"/><path d="M724.500 525V946M922.500 525V946M1120.500 525V946" stroke-dasharray="25 6 7 6"/>
          <g shape-rendering="auto" stroke="#555" stroke-dasharray="4 1"><circle cx="725" cy="514" r="5.500"/><circle cx="923" cy="514" r="5.500"/><circle cx="1121" cy="514" r="5.500"/></g></g>
          <path d="M723 513h2v2h-2zM921 513h2v2h-2zM1119 513h2v2h-2z" fill="#8a8ad0" stroke="none"/>
          <path d="M1296.500 563V622M1292 568.500H1306M1292 617.500H1306M1294 566l5 5M1294 615l5 5"/>
          <path d="M1292 589h3v4h-3zM1292 595h1v2h-1zM1294 596h1v1h-1z" fill="#000" stroke="none"/>
          <g stroke="#0a3cc0" fill="#0a3cc0"><path d="M1407.500 549V568L1397 558.500H1446M1407.500 598V617L1397 607.500H1446M1407.500 634V653L1397 643.500H1446M1407.500 856V875L1397 865.500H1446" fill="none"/><path d="M1398 559h9v9zM1398 608h9v9zM1398 644h9v9zM1398 866h9v9z"/></g>
          <g stroke="none"><text class="lv" x="1411" y="556">15.50</text><text class="lb" x="1410" y="568">Niveau 3</text><text class="lv" x="1411" y="605">13.00</text><text class="lb" x="1410" y="617">Niveau 2</text><text class="lv" x="1411" y="641">11.20</text><text class="lb" x="1410" y="653">Niveau 1</text><text class="lv" x="1411" y="863">0</text><text class="lb" x="1410" y="875">Niveau 0</text></g>
        </svg>
        <div class="navwheel"><svg width="30" height="113" fill="none" stroke="#888"><circle cx="24.500" cy="4.500" r="3"/><path d="M23 3l3 3M26 3l-3 3"/><path d="M5 30V27Q6 20 14 20h10v10a9 9 0 0 1-19 0z" fill="#e8e8e8"/><circle cx="14" cy="29" r="5" fill="#fff"/><path d="M2 55.500h26" stroke="#bbb"/><path d="M7 65h11v10H7z" fill="#a9d3a9" stroke="#8ab98a"/><circle cx="18" cy="75" r="3.500" fill="#fff"/><path d="M20 78l3 3" stroke-width="2"/><path d="M12 48h6l-3 3zM12 90h6l-3 3z" fill="#777" stroke="none"/><circle cx="24.500" cy="107" r="3"/><path d="M23 107h3"/><text x="16" y="42" font-size="9" font-weight="700" fill="#4a6fc0" stroke="none">2D</text></svg></div>
      </div>
      <div class="vbar sbar d-flex flex-column align-items-center"><span class="sbtn"><svg class="i16"><path d="M4 10l4-4 4 4" fill="none" stroke="#888" stroke-width="2"/></svg></span><span class="flex-grow-1"></span><span class="knob"></span><span class="flex-grow-1"></span><span class="sbtn"><svg class="i16"><use href="#chev"/></svg></span></div>
    </div>
    <div class="viewctl d-flex align-items-center">
      <div class="vc-icons d-flex align-items-center h-100">
        <button class="me-2 pe-1 text-nowrap">1 : 100</button>
        <svg class="i16"><path d="M1 3h14v10H1z" fill="#fff" stroke="#666" stroke-width="1.500"/><path d="M3 5h3v3H3zM9 5h3v3H9zM6 8h3v3H6zM12 8h2v3h-2z" fill="#888"/></svg>
        <svg class="i16"><path d="M1 5l5-4h9v9l-4 5H1zM1 5h10v10M11 5l4-4" fill="#fff" stroke="#555"/></svg>
        <svg class="i16"><path d="M6 0v12M0 6h12M2 2l8 8M10 2l-8 8" stroke="#e8962e"/><circle cx="6" cy="6" r="3" fill="#e8962e"/><circle cx="12" cy="10" r="3.500" fill="#5fc3cf"/><path d="M12 14v2" stroke="#777" stroke-width="2"/></svg>
        <svg class="i16"><circle cx="6" cy="6" r="5.500" fill="#e4e4e4" stroke="#888"/><path d="M0 14h10" stroke="#aaa" stroke-width="2"/><circle cx="12" cy="10" r="3.500" fill="#5fc3cf"/><path d="M12 14v2" stroke="#777" stroke-width="2"/></svg>
        <svg class="i16" fill="none" stroke-width="2"><path d="M4 16V5h12" stroke="#555"/><path d="M0 12h3M6 12h6V7M12 0v3" stroke="#1e88e0"/></svg>
        <svg class="i16" fill="none" stroke-width="2"><path d="M5 16V5h7" stroke="#555"/><path d="M0 12h3M11 0v3" stroke="#1e88e0"/><circle cx="12" cy="9" r="3.500" fill="#f0a855"/><path d="M12 13v3" stroke="#777"/></svg>
        <svg class="i16" fill="none" stroke="#888" stroke-width="1.500"><circle cx="4.500" cy="10" r="3"/><circle cx="11.500" cy="10" r="3"/><path d="M2 9l2-6M14 9l-2-6M7 10h2"/></svg>
        <svg class="i16"><circle cx="8" cy="5" r="4.500" fill="#5fc3cf"/><path d="M8 11v4" stroke="#666" stroke-width="3"/></svg>
        <svg class="i16" fill="none" stroke="#666"><path d="M2.500 1.500h9v4M2.500 1.500v9h4M5.500 4.500h4v4h-4z"/><path d="M8 8h6v7H8z" stroke-dasharray="2 1"/></svg>
        <svg class="i16" fill="none"><path d="M1 5l4-4h10v7M1 5h10M1 5v10M5 1v9M9 1v9M3 3h10" stroke="#666"/><path d="M4 15V9M8 15V9M1 11h9" stroke="#e02020" stroke-width="1.500"/><circle cx="12" cy="10" r="3.500" fill="#5fc3cf"/><path d="M12 14v2" stroke="#777" stroke-width="2"/></svg>
        <svg class="i16" fill="none"><path d="M1.500 0v7M14.500 0v5M1 3.500h13" stroke="#555"/><path d="M1.500 7v6H9" stroke="#555" stroke-dasharray="2 1"/><circle cx="12" cy="10" r="3.500" fill="#5fc3cf"/><path d="M12 14v2" stroke="#777" stroke-width="2"/></svg>
      </div>
      <div class="hbar sbar d-flex align-items-center flex-grow-1 h-100"><span class="sbtn"><svg class="i16"><path d="M10 4L6 8l4 4" fill="none" stroke="#888" stroke-width="2"/></svg></span><span class="flex-grow-1"></span><span class="knob"></span><span class="flex-grow-1"></span><span class="sbtn"><svg class="i16"><path d="M6 4l4 4-4 4" fill="none" stroke="#888" stroke-width="2"/></svg></span></div>
      <svg width="19" height="17"><path d="M13 7h2v2h-2zM13 12h2v2h-2zM8 12h2v2H8z" fill="#888"/></svg>
    </div>
  </section>

  <aside class="tree-pane d-flex flex-column flex-shrink-0">
    <div class="pane-head d-flex justify-content-between align-items-center">Arborescence du projet - DGP-lumiere-2025-0...<button aria-label="Fermer"><svg width="8" height="12"><path d="M1 2l8 8M9 2l-8 8" stroke="#777" stroke-width="2"/></svg></button></div>
    <div class="cats d-flex">
      <button class="cat-on" aria-label="Tout"><svg class="i16"><path d="M1 8l7-7 4 4M3 7v8h5M6 15v-5h3v5" fill="none" stroke="#555" stroke-width="1.300"/><path d="M10 8h5M10 11h5M10 14h5" stroke="#555"/><path d="M13 12h3v3h-3z" fill="#4aa3e0"/></svg></button>
      <button aria-label="Vues"><svg class="i16"><use href="#views"/></svg></button>
      <button aria-label="Légendes"><svg class="i16"><use href="#legend"/></svg></button>
      <button aria-label="Nomenclatures"><svg class="i16"><use href="#table"/></svg></button>
      <button aria-label="Feuilles"><svg class="i16"><path d="M1 12.500V3.500h7M1 12.500h6" fill="none" stroke="#555"/><path d="M7 2q3-2 5 0l3 8q0 4-3 4z" fill="#eee" stroke="#555"/><circle cx="12" cy="11" r="2.500" fill="#fff" stroke="#555"/></svg></button>
      <button aria-label="Familles"><svg class="i16"><path d="M1.500 1.500h13v13h-13z" fill="#eee" stroke="#555" stroke-width="1.500"/><path d="M7.500 1v8h7M1 9h6" fill="none" stroke="#555" stroke-width="1.500"/></svg></button>
      <button aria-label="Groupes"><svg class="i16"><path d="M4 1H1v14h3M12 1h3v14h-3" fill="none" stroke="#333" stroke-width="1.300"/><circle cx="7" cy="6" r="3" fill="#ddd" stroke="#555"/><path d="M6 8h6v5H7z" fill="#ddd" stroke="#555"/></svg></button>
      <button aria-label="Liens Revit"><svg class="i16" fill="none" stroke="#e8962e" stroke-width="1.500"><rect x="0" y="-3" width="9" height="5" rx="2.500" transform="translate(2 12) rotate(-42)"/><rect x="0" y="-3" width="9" height="5" rx="2.500" transform="translate(7 8) rotate(-42)"/></svg></button>
    </div>
    <label class="finder d-flex align-items-center"><svg class="i16"><circle cx="6.500" cy="6.500" r="5.500" fill="none" stroke="#666" stroke-width="1.500"/><path d="M10.500 10.500L15 15" stroke="#666" stroke-width="2"/></svg><input class="plain flex-grow-1" type="search" placeholder="Rechercher" aria-label="Rechercher"></label>
    <div class="d-flex flex-grow-1 overflow-hidden">
      <ul class="tree flex-grow-1" id="tree"></ul>
      <div class="tbar sbar overflow-hidden d-flex flex-column"><span class="sbtn"><svg class="i16"><path d="M4 10l4-4 4 4" fill="none" stroke="#888" stroke-width="2"/></svg></span><span class="knob mt-1"></span><span class="sbtn mt-auto"><svg class="i16"><use href="#chev"/></svg></span></div>
    </div>
  </aside>
</main>

<footer class="status d-flex align-items-center">
  <span class="msg text-nowrap">Cliquez pour sélectionner, TAB pour afficher d'autres options,&nbsp; CTRL pour ajouter et MAJ pour déselectionner.</span>
  <svg width="18" height="18"><path d="M1 4l4-2 3 2v10l-4 1-3-2z" fill="#5b9bd5"/><path d="M9 2l4-1 2 2v6l-5 1z" fill="#e8962e"/><path d="M6 8l4-2 3 2v8l-4 2-3-2z" fill="#3fa66a"/><path d="M11 15l5-5" stroke="#3b83d0" stroke-width="2"/></svg>
  <div class="d-flex align-items-center gap-2 ms-auto me-5 text-secondary">
    <svg class="i16"><use href="#chev"/></svg>
    <span class="d-flex align-items-center"><svg class="i16"><path d="M8 1h7v5h-4l-2 2V6H8z" fill="#fff" stroke="#888"/><circle cx="5" cy="8" r="2.500" fill="#fff" stroke="#888"/><path d="M1 15q0-4 4-4t4 4z" fill="#fff" stroke="#888"/></svg>:0</span>
    <svg class="i16 ms-3"><path d="M.5 1.500h15v14H.5z" fill="#fff" stroke="#555"/><path d="M0 2.500h16" stroke="#555" stroke-width="3"/><path d="M2 7h2M2 10h2M2 13h2M5 7h9M5 10h9M5 13h9" stroke="#555"/></svg>
    <svg class="i16 ms-1"><path d="M3.500 1.500h12v10h-12z" fill="#fff" stroke="#999"/><path d="M3 2.500h13" stroke="#999" stroke-width="3"/><path d="M6 6h8M6 9h8M0 13h6" stroke="#999" stroke-width="1.500"/><path d="M5 10l4 3-4 3z" fill="#999"/></svg>
    <select class="text-black-50" aria-label="Variante"><option>Modèle de base</option></select>
    <svg class="i16 me-5"><use href="#chev"/></svg>
  </div>
  <div class="status-right d-flex align-items-center ms-auto">
    <svg class="i16"><path d="M7 4H1.500V1.500H7M9 4h5V1.500H9" fill="none" stroke="#e8962e" stroke-width="1.500"/><use href="#cur" x="6" y="3"/></svg>
    <svg class="i16"><path d="M0 8l6-5 4 2-5 4z" fill="#4aa3e0"/><path d="M0 11l5 2" stroke="#4aa3e0"/><use href="#cur" x="5" y="3"/><path d="M10 1l5 5M15 1l-5 5" stroke="#e02020" stroke-width="2"/></svg>
    <svg class="i16"><path d="M2 1h7M3 1v5L1 8h8L8 6V1M5 8v5" fill="none" stroke="#666"/><use href="#cur" x="6" y="3"/></svg>
    <svg class="i16"><path d="M0 3l6-2v12l-6 2z" fill="#4aa3e0"/><use href="#cur" x="6" y="3"/><path d="M10 1l5 5M15 1l-5 5" stroke="#e02020" stroke-width="2"/></svg>
    <svg class="i16"><path d="M6 0v12M0 6h12M4 2l2-2 2 2M2 4L0 6l2 2" fill="none" stroke="#444"/><use href="#cur" x="7" y="4"/></svg>
    <svg class="i16"><circle cx="8" cy="8" r="6" fill="none" stroke="#c0c0c0" stroke-width="3" stroke-dasharray="3 1.700"/></svg>
    <span class="d-flex align-items-center"><svg class="i16"><path d="M1 1h14L10 8v6l-3 1V8z" fill="#ddd" stroke="#555"/></svg>:0</span>
  </div>
</footer>

<script>
// Property palette: s = section, t = text, d = read-only, b = button, c = checkbox, i = text box, e = boxed text box, m = empty with picker
const props=[["s","Graphismes"],["e","Echelle de la vue","1 : 100"],["d","Valeur de l'échelle\u00a0\u00a0\u00a0 1:","100"],["t","Afficher le modèle","Normal(e)"],["t","Niveau de détail","Moyen"],["t","Visibilité des éléments","Afficher l'original"],["b","Remplacements visibilité / g...","Modifier..."],["b","Options d'affichage des gra...","Modifier..."],["i","Cacher pour une échelle plu...","1 : 100"],["t","Discipline","Architecture"],["t","Afficher les lignes cachées","Par discipline"],["t","Emplacement du choix des ...","Arrière-plan"],["b","Choix des couleurs","<Aucun>"],["t","Style d'affichage de l'analys...","Aucun(e)"],["c","Trajectoire du soleil",0],
["s","Texte"],["m","annotation de l'occurence"],["m","ID CIRTEC occurence"],["m","LOT"],
["s","Etendues"],["c","Cadrer la vue",1],["c","Zone cadrée visible",1],["c","Cadrage de l'annotation",0],["b","Délimitation éloignée","Délimitation sans ligne"],["t","Décalage de la délimitation ...","11.1846"],["t","Zone de définition","Aucun(e)"],
["s","Données d'identification"],["b","Gabarit de vue","<Aucun>"],["t","Nom de la vue","Coupe 3"],["d","Dépendance","Indépendant"],["t","Titre sur la feuille",""],["d","Référencement du jeu de fe...","<Aucun>"],["d","Référencement de la feuille",""],["d","Référencement du détail",""],
["s","Phase de construction"],["t","Filtre des phases","etat fini"],["t","Phase","Nouvelle construction"]];
const esc=s=>String(s).replace(/</g,"&lt;").replace(/>/g,"&gt;");
document.getElementById("props").innerHTML=props.map(([k,n,v],i)=>{
  if(k==="s")return `<tr><th colspan="3" class="sect"><span class="d-flex justify-content-between align-items-center">${n}<svg width="7" height="9"><path d="M1 4l2.500-3L6 4M1 8l2.500-3L6 8" fill="none" stroke="#333" stroke-width="1.300"/></svg></span></th></tr>`;
  const id="p"+i;let cell="";
  if(k==="b")cell=`<button id="${id}">${esc(v)}</button>`;
  else if(k==="c")cell=`<input type="checkbox" class="form-check-input" id="${id}"${v?" checked":""}>`;
  else if(k==="e"||k==="i")cell=`<input class="plain${k==="e"?" boxed":""}" id="${id}" value="${v}">`;
  else if(k==="m")cell=`<input class="plain" id="${id}">`;
  else cell=esc(v);
  const name="bceim".includes(k)?`<label for="${id}">${n}</label>`:n;
  return `<tr${k==="d"?' class="dim"':""}><th>${name}</th><td>${cell}</td><td class="mini">${k==="m"?'<button aria-label="Associer"></button>':""}</td></tr>`}).join("");

// Project browser: [kind, text, outer guide, inner guide]; guides: 0 none, 1 through, 2 last
const v=(t,o,last,b)=>["v",t,1,last?2:1,b];
const tree=[["r","Vues (tout)","views"],["+","Plans de structure (Plan structurel)",1],["-","Plans d'étage",1],v("Niveau 0",1,0,"hover-row"),v("Niveau 0 Demol"),v("Niveau 0 Existant"),v("Niveau 1"),v("Niveau 2"),v("Niveau 3"),v("Plan Masse",1,1),["-","Plans de plafond",1],v("Niveau 0"),v("Niveau 1"),v("Niveau 2"),v("Niveau 3",1,1),["-","Vues 3D",1],v("{3D}",1,1),["-","Coupes (Coupes)",1],v("Coupe 1"),v("Coupe 2"),v("Coupe 3",1,0,"fw-bold"),v("Coupe 4"),v("Coupe 5",1,1),["+","Nomenclatures graphiques de poteaux",2],
["r","Légendes","legend"],["l","Légende réseaux",1],["l","Légende voirie",1],["l","NORD",2],
["r","Nomenclatures/Quantités (tout)","table"],...["Liste des feuilles","Nomenclature de mur","Nomenclature des fenêtres","Nomenclature des pièces","Nomenclature des plafonds","Nomenclature des portes","Nomenclature des poteaux porteurs","Nomenclature des toits","Relevé de matériaux d'ossature"].map(t=>["l",t,1])];
const sign=(x,plus)=>`<path d="M${x} 10h8${plus?`M${x+4} 6v8`:""}" stroke="#777" stroke-width="2"/>`;
document.getElementById("tree").innerHTML=tree.map(([k,t,o,n,c])=>{
  const w={r:22,"+":34,"-":34,v:54,l:38}[k];
  let d="";
  if(k!=="r")d+=`M8.500 0V${o===2?10:20}`;
  if(k==="+"||k==="-")d+="M8 10.500H18";
  if(k==="l")d+="M8 10.500H34";
  if(k==="v")d+=`M24.500 0V${n===2?10:20}M24 10.500H50`;
  const ex=k==="r"?sign(5,false):k==="+"||k==="-"?sign(21,k==="+"):"";
  const ic=k==="r"?`<svg class="i16"><use href="#${o}"/></svg>`:k==="v"||k==="l"?'<svg class="i16"><use href="#sheet"/></svg>':"";
  return `<li class="${c||""}"><svg width="${w}" height="20"><path d="${d}" stroke="#aaa" stroke-dasharray="3 2"/>${ex}</svg>${ic}<a href="#">${t}</a></li>`}).join("");
</script>
<script src="https://cdn.jsdelivr.net/npm/bootstrap@5.3.0/dist/js/bootstrap.bundle.min.js"></script>
</body>
</html>
